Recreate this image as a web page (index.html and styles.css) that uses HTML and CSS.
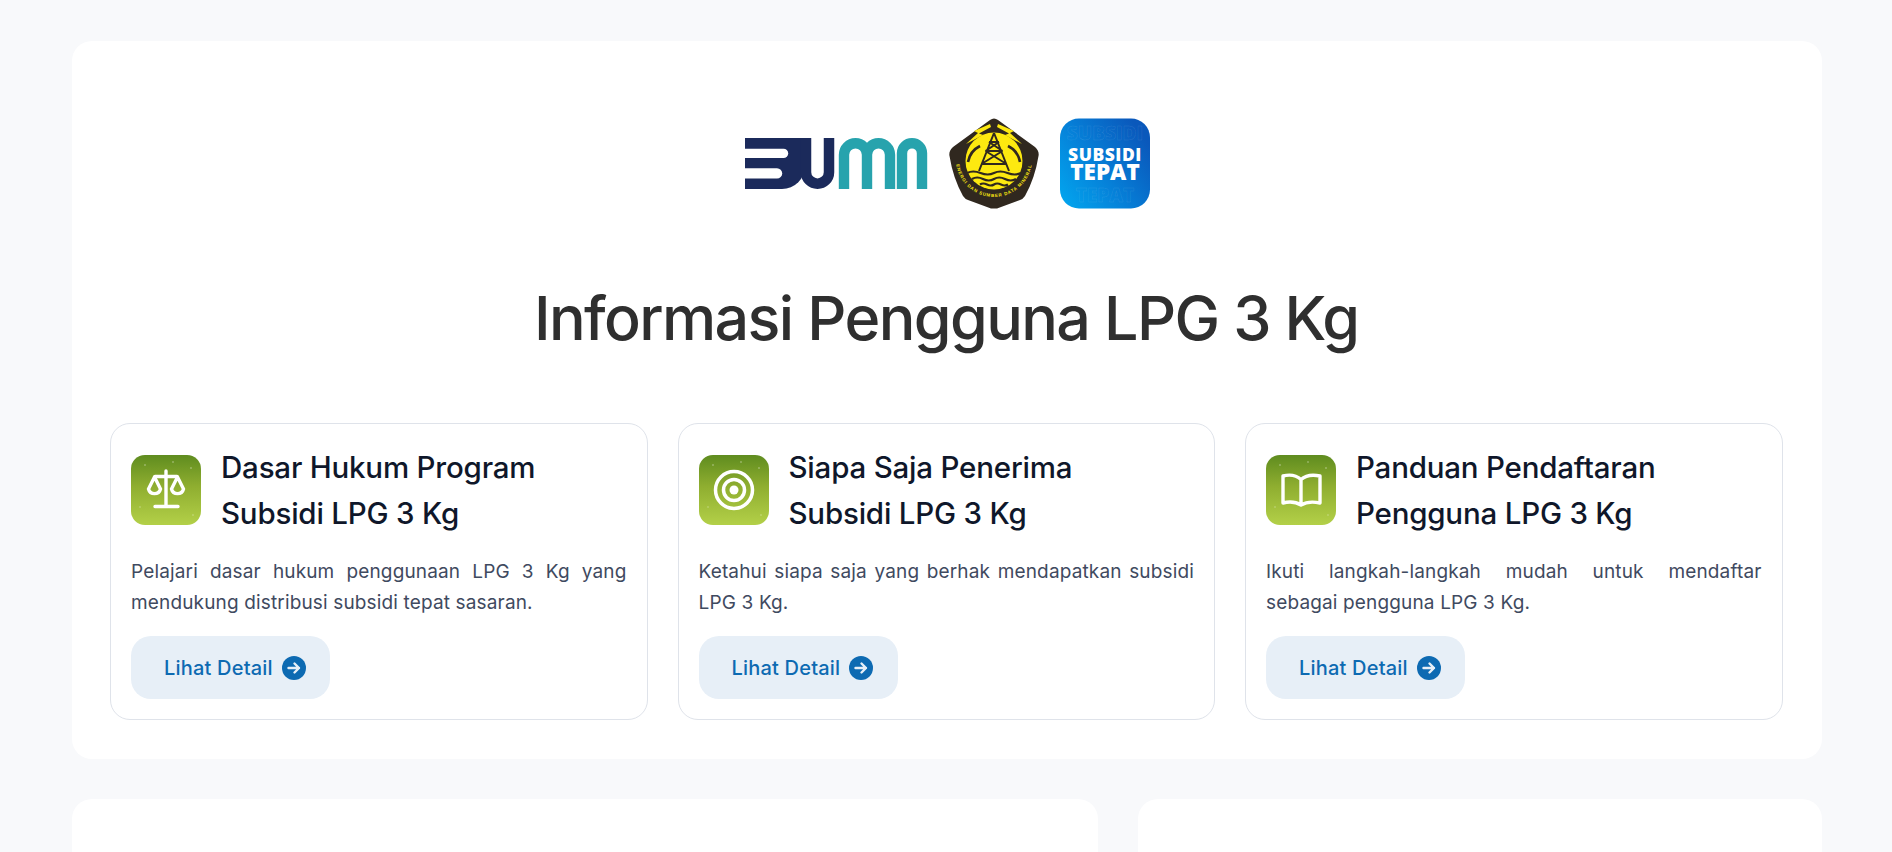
FILE: index.html
```html
<!DOCTYPE html>
<html lang="id">
<head>
<meta charset="utf-8">
<title>Informasi Pengguna LPG 3 Kg</title>
<link rel="stylesheet" href="styles.css">
</head>
<body>
<main class="page">
  <section class="panel hero">
    <div class="logos">
      <svg class="logo-bumn" viewBox="0 0 183 51" role="img" aria-label="BUMN">
        <path d="M0 0H60V28A23 23 0 0 1 37 51H0Z" fill="#1b2a5b"/>
        <path d="M61 0V34.200a11.500 11.500 0 0 0 23 0V0" fill="none" stroke="#1b2a5b" stroke-width="10.500"/>
        <path d="M-10 15.400H38.500" fill="none" stroke="#fff" stroke-width="9.400" stroke-linecap="round"/>
        <path d="M-10 35.400H32" fill="none" stroke="#fff" stroke-width="10.400" stroke-linecap="round"/>
        <path d="M99 51V16.700a11.500 11.500 0 0 1 23 0V51M122 16.700a11.500 11.500 0 0 1 23 0V51M157 51V15.200a10 10 0 0 1 20 0V51" fill="none" stroke="#27a3ad" stroke-width="10.400"/>
      </svg>
      <svg class="logo-square" viewBox="0 0 90 91" role="img" aria-label="ESDM">
        <path d="M45 .5Q47 .5 49 2L86 29Q90.500 33 89.500 38Q86 60 76 78Q74 81 71 82L48 90.500H42L19 82Q16 81 14 78Q4 60 .5 38Q-.5 33 4 29L41 2Q43 .5 45 .5Z" fill="#30281f"/>
        <circle cx="45" cy="43" r="28.500" fill="#fde910"/>
        <path d="M41 6 25 13 29 15 17 26 34 17 30 15.500 42 9ZM49 6 65 13 61 15 73 26 56 17 60 15.500 48 9Z" fill="#fde910"/>
        <g fill="none" stroke="#30281f" stroke-width="2">
          <path d="M45 15 30 53M45 15 60 53M40 24H50M36.500 33H53.500M32.500 46H57.500M40 24 53.500 33M50 24 36.500 33M36.500 33 57.500 46M53.500 33 32.500 46"/>
        </g>
        <g fill="none" stroke="#30281f" stroke-width="2.600">
          <path d="M19 44Q21 33 31 28M71 44Q69 33 59 28"/>
        </g>
        <g fill="none" stroke="#30281f" stroke-width="2.200">
          <path d="M18 55q6-3 13.500 0t13.500 0 13.500 0 13.500 0"/>
          <path d="M23 61q5-3 11 0t11 0 11 0 11 0"/>
          <path d="M31 66.500q3-2 7 0t7 0 7 0 7 0"/>
        </g>
        <defs>
          <path id="esdm-arc" d="M7 41a38 38 0 0 0 76 0"/>
        </defs>
        <text class="esdm-text"><textPath href="#esdm-arc" startOffset="50%" text-anchor="middle">ENERGI DAN SUMBER DATA MINERAL</textPath></text>
      </svg>
      <svg class="logo-square" viewBox="0 0 90 90" role="img" aria-label="Subsidi Tepat">
        <defs>
          <linearGradient id="tile" x1="0" y1="1" x2="1" y2="0.300">
            <stop offset="0" stop-color="#02a8f0"/>
            <stop offset="0.500" stop-color="#0680d8"/>
            <stop offset="1" stop-color="#0a58bb"/>
          </linearGradient>
        </defs>
        <rect width="90" height="90" rx="19" fill="url(#tile)"/>
        <text class="tile-ghost" x="45" y="21">SUBSIDI</text>
        <text class="tile-ghost" x="45" y="83">TEPAT</text>
        <text class="tile-top" x="45" y="42.500">SUBSIDI</text>
        <text class="tile-bottom" x="45" y="61">TEPAT</text>
      </svg>
    </div>
    <h1 class="hero-title">Informasi Pengguna LPG 3 Kg</h1>
    <div class="cards">
      <article class="card">
        <header class="card-head">
          <div class="card-icon">
            <svg viewBox="0 0 70 70" fill="none" stroke="#fff" stroke-width="3.400" stroke-linecap="round" stroke-linejoin="round">
              <path d="M35 16V50M24 51.500H47M24 21.500H46"/>
              <path d="M23.500 22 17.500 34a6.200 6.200 0 0 0 12 0Z"/>
              <path d="M46.500 22 40.500 34a6.200 6.200 0 0 0 12 0Z"/>
            </svg>
          </div>
          <h2 class="card-title">Dasar Hukum Program Subsidi LPG 3 Kg</h2>
        </header>
        <p class="card-text">Pelajari dasar hukum penggunaan LPG 3 Kg yang mendukung distribusi subsidi tepat sasaran.</p>
        <a class="detail-btn" href="#">Lihat Detail
          <svg class="detail-arrow" viewBox="0 0 24 24"><circle cx="12" cy="12" r="12" fill="#0d6ab2"/><path d="M6.500 12H17M12.500 7.500 17 12 12.500 16.500" fill="none" stroke="#e7eff7" stroke-width="2.400" stroke-linecap="round" stroke-linejoin="round"/></svg>
        </a>
      </article>
      <article class="card">
        <header class="card-head">
          <div class="card-icon">
            <svg viewBox="0 0 70 70" fill="none" stroke="#fff" stroke-width="3.500">
              <circle cx="35" cy="35" r="18.500"/>
              <circle cx="35" cy="35" r="10.500"/>
              <circle cx="35" cy="35" r="4.500" fill="#fff" stroke="none"/>
            </svg>
          </div>
          <h2 class="card-title">Siapa Saja Penerima Subsidi LPG 3 Kg</h2>
        </header>
        <p class="card-text">Ketahui siapa saja yang berhak mendapatkan subsidi LPG 3 Kg.</p>
        <a class="detail-btn" href="#">Lihat Detail
          <svg class="detail-arrow" viewBox="0 0 24 24"><circle cx="12" cy="12" r="12" fill="#0d6ab2"/><path d="M6.500 12H17M12.500 7.500 17 12 12.500 16.500" fill="none" stroke="#e7eff7" stroke-width="2.400" stroke-linecap="round" stroke-linejoin="round"/></svg>
        </a>
      </article>
      <article class="card">
        <header class="card-head">
          <div class="card-icon">
            <svg viewBox="0 0 70 70" fill="none" stroke="#fff" stroke-width="3.400" stroke-linejoin="round" stroke-linecap="round">
              <path d="M35 24.500C30 20 23 19.500 17 21V48C23 46.500 30 47 35 50 40 47 47 46.500 54 48V21C47 19.500 40 20 35 24.500ZM35 24.500V50"/>
            </svg>
          </div>
          <h2 class="card-title">Panduan Pendaftaran Pengguna LPG 3 Kg</h2>
        </header>
        <p class="card-text">Ikuti langkah-langkah mudah untuk mendaftar sebagai pengguna LPG 3 Kg.</p>
        <a class="detail-btn" href="#">Lihat Detail
          <svg class="detail-arrow" viewBox="0 0 24 24"><circle cx="12" cy="12" r="12" fill="#0d6ab2"/><path d="M6.500 12H17M12.500 7.500 17 12 12.500 16.500" fill="none" stroke="#e7eff7" stroke-width="2.400" stroke-linecap="round" stroke-linejoin="round"/></svg>
        </a>
      </article>
    </div>
  </section>
  <div class="lower">
    <section class="panel lower-panel"></section>
    <section class="panel lower-panel"></section>
  </div>
</main>
</body>
</html>
```
FILE: styles.css
```css
* { box-sizing: border-box; }
html, body { margin: 0; height: 852px; overflow: hidden; }
body {
  background: #f8f9fb;
  font-family: "Inter", "Noto Sans", sans-serif;
}
.page {
  padding: 41px 70px 0 72px;
  height: 852px;
  overflow: hidden;
  display: flex;
  flex-direction: column;
  gap: 40px;
}
.panel {
  background: #fff;
  border-radius: 20px;
}
.hero {
  flex: none;
  height: 718px;
  padding: 77px 39.500px 39px 38px;
}
.logos {
  display: flex;
  justify-content: center;
  align-items: center;
  gap: 21px;
  height: 91px;
  padding-left: 3px;
}
.logo-bumn { width: 183px; height: 51px; margin-top: -1px; }
.logo-square { width: 90px; height: 91px; }
.esdm-text { font: 700 4.500px "Liberation Sans", sans-serif; fill: #fde910; letter-spacing: 0.800px; }
.tile-ghost { font: 800 19px "Open Sans", sans-serif; fill: none; stroke: #fff; stroke-opacity: 0.120; stroke-width: 0.500; text-anchor: middle; }
.tile-top, .tile-bottom { font-family: "Open Sans", sans-serif; font-weight: 800; fill: #fff; text-anchor: middle; }
.tile-top { font-size: 17.500px; letter-spacing: 0.500px; }
.tile-bottom { font-size: 22.500px; }
.hero-title {
  margin: 70px 0 66px;
  text-align: center;
  font-size: 61px;
  line-height: 78px;
  font-weight: 500;
  color: #2f2f2f;
  letter-spacing: -1.600px;
}
.cards {
  display: grid;
  grid-template-columns: repeat(3, 1fr);
  gap: 30px;
}
.card {
  height: 297px;
  padding: 20px;
  background: #fff;
  border: 1px solid #dfe3ea;
  border-radius: 20px;
}
.card-head {
  display: flex;
  align-items: center;
  gap: 20px;
}
.card-icon {
  flex: none;
  width: 70px;
  height: 70px;
  border-radius: 14px;
  background:
    radial-gradient(circle at 14px 10px, rgba(255,255,255,.22) 0 1px, transparent 1.500px),
    radial-gradient(circle at 42px 7px, rgba(255,255,255,.22) 0 1px, transparent 1.500px),
    radial-gradient(circle at 60px 13px, rgba(255,255,255,.22) 0 1px, transparent 1.500px),
    radial-gradient(circle at 9px 52px, rgba(255,255,255,.16) 0 1px, transparent 1.500px),
    radial-gradient(circle at 62px 60px, rgba(255,255,255,.16) 0 1px, transparent 1.500px),
    linear-gradient(180deg, #5f8c1f 0%, #8fae30 45%, #b3d048 100%);
}
.card-icon svg { display: block; width: 70px; height: 70px; }
.card-title {
  margin: 0;
  font-size: 29.500px;
  line-height: 46px;
  font-weight: 500;
  color: #0f172a;
  letter-spacing: -0.200px;
  max-width: 340px;
}
.card-text {
  margin: 20px 0 18px;
  height: 62px;
  font-size: 19px;
  line-height: 31px;
  font-weight: 400;
  color: #3f4a60;
  letter-spacing: 0.150px;
  text-align: justify;
}
.detail-btn {
  display: inline-flex;
  align-items: center;
  gap: 9px;
  width: 199px;
  height: 63px;
  padding-left: 33px;
  border-radius: 20px;
  background: #e7eff7;
  color: #0d6ab2;
  font-size: 20px;
  font-weight: 500;
  letter-spacing: 0.200px;
  text-decoration: none;
  white-space: nowrap;
}
.detail-arrow { flex: none; width: 24px; height: 24px; }
.lower {
  flex: none;
  display: grid;
  grid-template-columns: 1026px 684px;
  gap: 40px;
}
.lower-panel { height: 300px; }
```
